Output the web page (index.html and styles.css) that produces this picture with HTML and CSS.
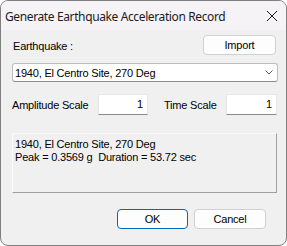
FILE: index.html
```html
<!DOCTYPE html>
<html lang="en">
<head>
    <meta charset="UTF-8">
    <title>Generate Earthquake Acceleration Record</title>
    <link rel="stylesheet" href="styles.css">
</head>
<body>
<div class="window">
    <div class="titlebar">
        <span class="title">Generate Earthquake Acceleration Record</span>
        <svg class="close" width="12" height="12" viewBox="0 0 12 12">
            <path d="M1 1 L11 11 M11 1 L1 11" stroke="#1b1b1b" stroke-width="1" fill="none"/>
        </svg>
    </div>
    <div class="content">
        <div class="row-top">
            <span class="label">Earthquake :</span>
            <a href="javascript:;" class="btn">Import</a>
        </div>
        <div class="combo">
            <span>1940, El Centro Site, 270 Deg</span>
            <svg width="8" height="5" viewBox="0 0 8 5">
                <path d="M0.5 0.5 L4 4 L7.5 0.5" stroke="#5f5f5f" stroke-width="1" fill="none"/>
            </svg>
        </div>
        <div class="row-scale">
            <span class="label amp">Amplitude Scale</span>
            <div class="edit amp-edit">1</div>
            <span class="label time">Time Scale</span>
            <div class="edit time-edit">1</div>
        </div>
        <div class="info">
            <p>1940, El Centro Site, 270 Deg</p>
            <p>Peak = 0.3569 g&nbsp; Duration = 53.72 sec</p>
        </div>
        <div class="row-btns">
            <a href="javascript:;" class="btn ok">OK</a>
            <a href="javascript:;" class="btn cancel">Cancel</a>
        </div>
    </div>
</div>
</body>
</html>
```

FILE: styles.css
```css
body{
    margin: 0;
    background: #fff;
}
p{
    margin: 0;
}
a{
    text-decoration: none;
    color: #000;
}

.window{
    width: 287px;
    height: 246px;
    box-sizing: border-box;
    border: 1px solid #7f7f7f;
    border-radius: 8px;
    overflow: hidden;
    background: #f0f0f0;
    font: 11px "Liberation Sans", Arial, sans-serif;
    letter-spacing: -0.2px;
    color: #000;
}
.titlebar{
    height: 29px;
    background: #f6f3f6;
    display: flex;
    align-items: center;
    justify-content: space-between;
    padding: 0 8px 0 4px;
}
.title{
    font: 12px "Noto Sans", "Liberation Sans", sans-serif;
    letter-spacing: -0.38px;
    color: #1b1b1b;
    padding-top: 1px;
}
.close{
    display: block;
}

.content{
    padding: 0 8px 0 11px;
}
.row-top{
    margin-top: 5px;
    height: 20px;
    display: flex;
    align-items: center;
    justify-content: space-between;
}
.row-top .label{
    padding-left: 1px;
    padding-top: 2px;
}
.btn{
    display: block;
    box-sizing: border-box;
    height: 20px;
    line-height: 18px;
    text-align: center;
    background: #fdfdfd;
    border: 1px solid #d0d0d0;
    border-radius: 4px;
}
.row-top .btn{
    width: 73px;
    margin-right: 2px;
}

.combo{
    margin-top: 8px;
    width: 266px;
    height: 19px;
    box-sizing: border-box;
    background: #fff;
    border: 1px solid #bdbdbd;
    border-bottom-color: #8c8c8c;
    border-radius: 3px;
    display: flex;
    align-items: center;
    justify-content: space-between;
    padding: 0 4px 0 2px;
}
.combo svg{
    display: block;
}

.row-scale{
    margin-top: 12px;
    height: 21px;
    display: flex;
    align-items: center;
}
.row-scale .amp{
    width: 86px;
}
.row-scale .time{
    width: 62px;
    margin-left: 16px;
}
.edit{
    box-sizing: border-box;
    height: 21px;
    background: #fff;
    border: 1px solid #e6e6e6;
    border-bottom-color: #8a8a8a;
    text-align: right;
    line-height: 18px;
    padding-right: 4px;
}
.amp-edit{
    width: 50px;
}
.time-edit{
    width: 51px;
}

.info{
    margin-top: 18px;
    width: 265px;
    height: 60px;
    box-sizing: border-box;
    border: 1px solid #fbfbfb;
    border-right-color: #a0a0a0;
    border-bottom-color: #a0a0a0;
    padding: 4px 0 0 2px;
    line-height: 13px;
}

.row-btns{
    margin-top: 16px;
    display: flex;
    justify-content: flex-end;
    gap: 6px;
    padding-right: 12px;
}
.ok{
    width: 71px;
    border-color: #0067c0;
}
.cancel{
    width: 72px;
}
```
